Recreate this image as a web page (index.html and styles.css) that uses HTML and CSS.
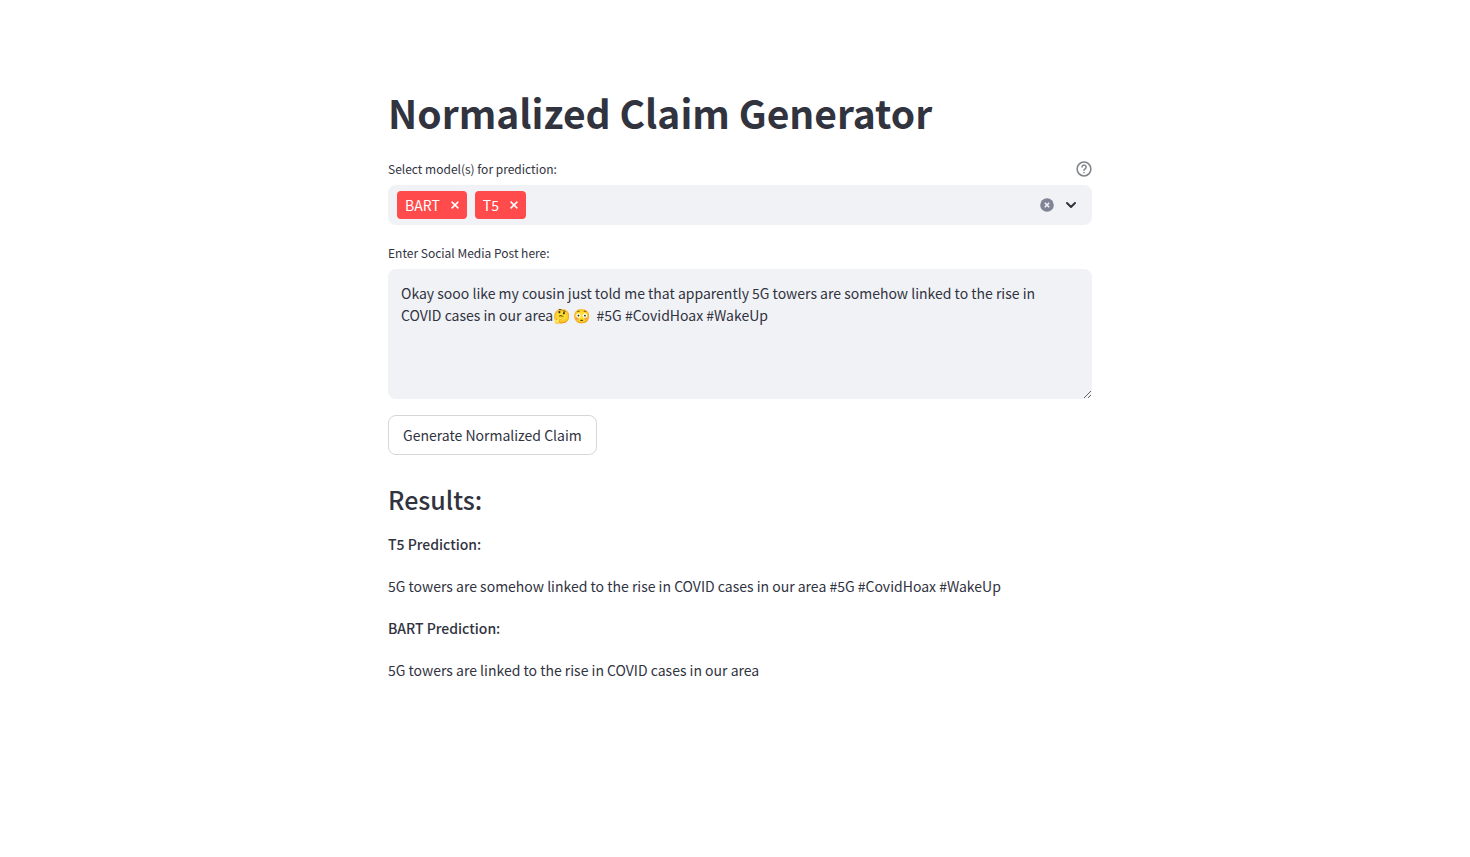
FILE: index.html
```html
<!DOCTYPE html>
<html lang="en">
<head>
<meta charset="utf-8">
<meta name="viewport" content="width=device-width, initial-scale=1">
<title>Normalized Claim Generator</title>
<link rel="stylesheet" href="styles.css">
</head>
<body>
<main class="page">
  <h1 class="title">Normalized Claim Generator</h1>
  <form class="form">
    <div class="field">
      <div class="field-head">
        <label class="label" for="model-input">Select model(s) for prediction:</label>
        <button class="icon-button" type="button" aria-label="Help">
          <svg width="16" height="16" viewBox="0 0 16 16" fill="none" stroke="#808289" stroke-width="1.5" stroke-linecap="round" stroke-linejoin="round"><circle cx="8" cy="8" r="6.9"/><path d="M6 6.1a2.05 2.05 0 1 1 3.1 1.75C8.3 8.3 8 8.6 8 9.3"/><path d="M8 11.6v.1"/></svg>
        </button>
      </div>
      <div class="multiselect">
        <span class="tag">BART<button class="tag-remove" type="button" aria-label="Remove BART"><svg width="8" height="8" viewBox="0 0 8 8" stroke="#fff" stroke-width="1.5"><path d="M.6.6l6.8 6.8M7.4.6L.6 7.4"/></svg></button></span>
        <span class="tag">T5<button class="tag-remove" type="button" aria-label="Remove T5"><svg width="8" height="8" viewBox="0 0 8 8" stroke="#fff" stroke-width="1.5"><path d="M.6.6l6.8 6.8M7.4.6L.6 7.4"/></svg></button></span>
        <input class="multiselect-input" id="model-input" type="text" autocomplete="off">
        <button class="icon-button" type="button" aria-label="Clear all">
          <svg width="14" height="14" viewBox="0 0 14 14"><circle cx="7" cy="7" r="6.8" fill="#808495"/><path d="M4.8 4.8l4.4 4.4M9.2 4.8L4.8 9.2" stroke="#f0f2f6" stroke-width="1.6"/></svg>
        </button>
        <button class="icon-button chevron" type="button" aria-label="Open">
          <svg width="12" height="8" viewBox="0 0 12 8" fill="none" stroke="#31333f" stroke-width="2" stroke-linecap="round" stroke-linejoin="round"><path d="M2 2l4 4 4-4"/></svg>
        </button>
      </div>
    </div>
    <div class="field">
      <div class="field-head"><label class="label" for="post">Enter Social Media Post here:</label></div>
      <textarea class="textarea" id="post" spellcheck="false">Okay sooo like my cousin just told me that apparently 5G towers are somehow linked to the rise in COVID cases in our area🤔 😳  #5G #CovidHoax #WakeUp</textarea>
    </div>
    <button class="submit" type="button">Generate Normalized Claim</button>
  </form>
  <section class="results">
    <h2 class="subtitle">Results:</h2>
    <p class="text"><strong>T5 Prediction:</strong></p>
    <p class="text">5G towers are somehow linked to the rise in COVID cases in our area #5G #CovidHoax #WakeUp</p>
    <p class="text"><strong>BART Prediction:</strong></p>
    <p class="text">5G towers are linked to the rise in COVID cases in our area</p>
  </section>
</main>
</body>
</html>
```

FILE: styles.css
```css
* { box-sizing: border-box; }
body {
  margin: 0;
  padding-left: 10px;
  background: #fff;
  color: #31333f;
  font-family: "Noto Sans CJK SC", "Noto Sans", sans-serif;
  font-size: 14px;
  line-height: 26px;
}
button, input, textarea { font: inherit; color: inherit; }
.page { max-width: 736px; margin: 0 auto; padding: 80px 16px; }
.title { margin: 0; padding: 6px 0 19px; font-size: 39px; font-weight: 700; line-height: 52px; }
.form { display: flex; flex-direction: column; gap: 16px; }
.field { display: flex; flex-direction: column; }
.field-head { display: flex; justify-content: space-between; align-items: center; height: 28px; padding-bottom: 4px; }
.label { font-size: 12px; line-height: 20px; }
.icon-button { display: flex; padding: 0; border: 0; background: none; cursor: pointer; }
.multiselect {
  display: flex; align-items: center; min-height: 40px;
  padding: 6px 15px 6px 9px; border-radius: 8px; background: #f0f2f6;
}
.tag {
  display: flex; align-items: center; height: 28px; margin-right: 8px;
  padding: 0 8px; border-radius: 4px; background: #ff4b4b; color: #fff; gap: 11px;
}
.tag-remove { display: flex; padding: 0; border: 0; background: none; cursor: pointer; }
.multiselect-input { flex: 1; min-width: 0; border: 0; background: none; outline: 0; }
.chevron { margin-left: 11px; }
.textarea {
  display: block; width: 100%; height: 130px; padding: 13px 24px 13px 13px;
  border: 0; border-radius: 8px; background: #f0f2f6; line-height: 22px; outline: 0; resize: vertical;
}
.submit {
  align-self: flex-start; height: 40px; padding: 0 14px;
  border: 1px solid #d6d6d9; border-radius: 8px; background: #fff; cursor: pointer;
}
.results { display: flex; flex-direction: column; gap: 16px; padding-top: 16px; }
.subtitle { margin: 0; padding: 12px 0 0; font-size: 25px; font-weight: 500; line-height: 32px; }
.text { margin: 0; }
.text strong { font-weight: 500; }
```
